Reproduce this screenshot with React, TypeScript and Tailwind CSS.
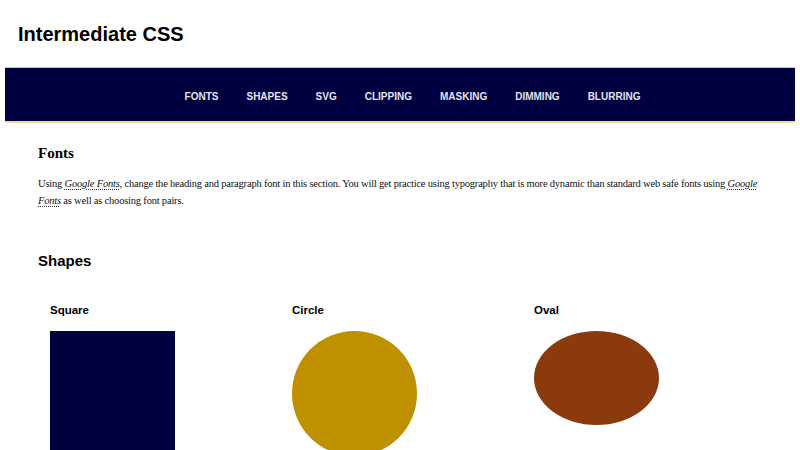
export default function App() {
  const nav = ["FONTS", "SHAPES", "SVG", "CLIPPING", "MASKING", "DIMMING", "BLURRING"];
  const sans = { fontFamily: '"Liberation Sans", Arial, sans-serif' };
  const serif = { fontFamily: '"Liberation Serif", "Times New Roman", serif' };
  return (
    <div className="w-[800px] h-[450px] overflow-hidden bg-white text-black" style={sans}>
      <header className="h-[68px] pl-[18px] flex items-center">
        <h1 className="text-[20px] font-bold leading-none mt-[-1px]">Intermediate CSS</h1>
      </header>
      <nav className="mx-[5px] h-[55px] bg-[#000040] border-b-2 border-[#eedc9a] shadow-[0_-1px_0_#c8c8e0] flex items-center justify-center pl-[25px] pt-[4px]">
        <ul className="flex gap-[28px]">
          {nav.map((n) => (
            <li key={n} className="text-[10px] font-bold text-[#e4e4f0] leading-none">{n}</li>
          ))}
        </ul>
      </nav>
      <section className="pl-[38px] pr-[30px] pt-[23px]">
        <h2 className="text-[15px] font-bold leading-none" style={serif}>Fonts</h2>
        <p className="mt-[14px] text-[10.5px] tracking-[-0.2px] leading-[17px] text-[#111]" style={serif}>
          Using{" "}
          <a className="italic underline decoration-dotted decoration-[#333] underline-offset-2">Google Fonts</a>, change the heading and paragraph font in this section. You will get practice using typography that is more dynamic than standard web safe fonts using{" "}
          <a className="italic underline decoration-dotted decoration-[#333] underline-offset-2">Google Fonts</a> as well as choosing font pairs.
        </p>
      </section>
      <section className="px-[38px] pt-[44px]">
        <h2 className="text-[15px] font-bold leading-none">Shapes</h2>
        <div className="flex pl-[12px] pt-[37px]">
          <div className="w-[242px] shrink-0">
            <h3 className="text-[11.5px] font-bold leading-none">Square</h3>
            <div className="mt-[14px] w-[125px] h-[125px] bg-[#000040]" />
          </div>
          <div className="w-[242px] shrink-0">
            <h3 className="text-[11.5px] font-bold leading-none">Circle</h3>
            <div className="mt-[14px] w-[125px] h-[125px] rounded-full bg-[#bf9000]" />
          </div>
          <div className="w-[242px] shrink-0">
            <h3 className="text-[11.5px] font-bold leading-none">Oval</h3>
            <div className="mt-[14px] w-[125px] h-[94px] rounded-[50%] bg-[#8b3a0e]" />
          </div>
        </div>
      </section>
    </div>
  );
}
